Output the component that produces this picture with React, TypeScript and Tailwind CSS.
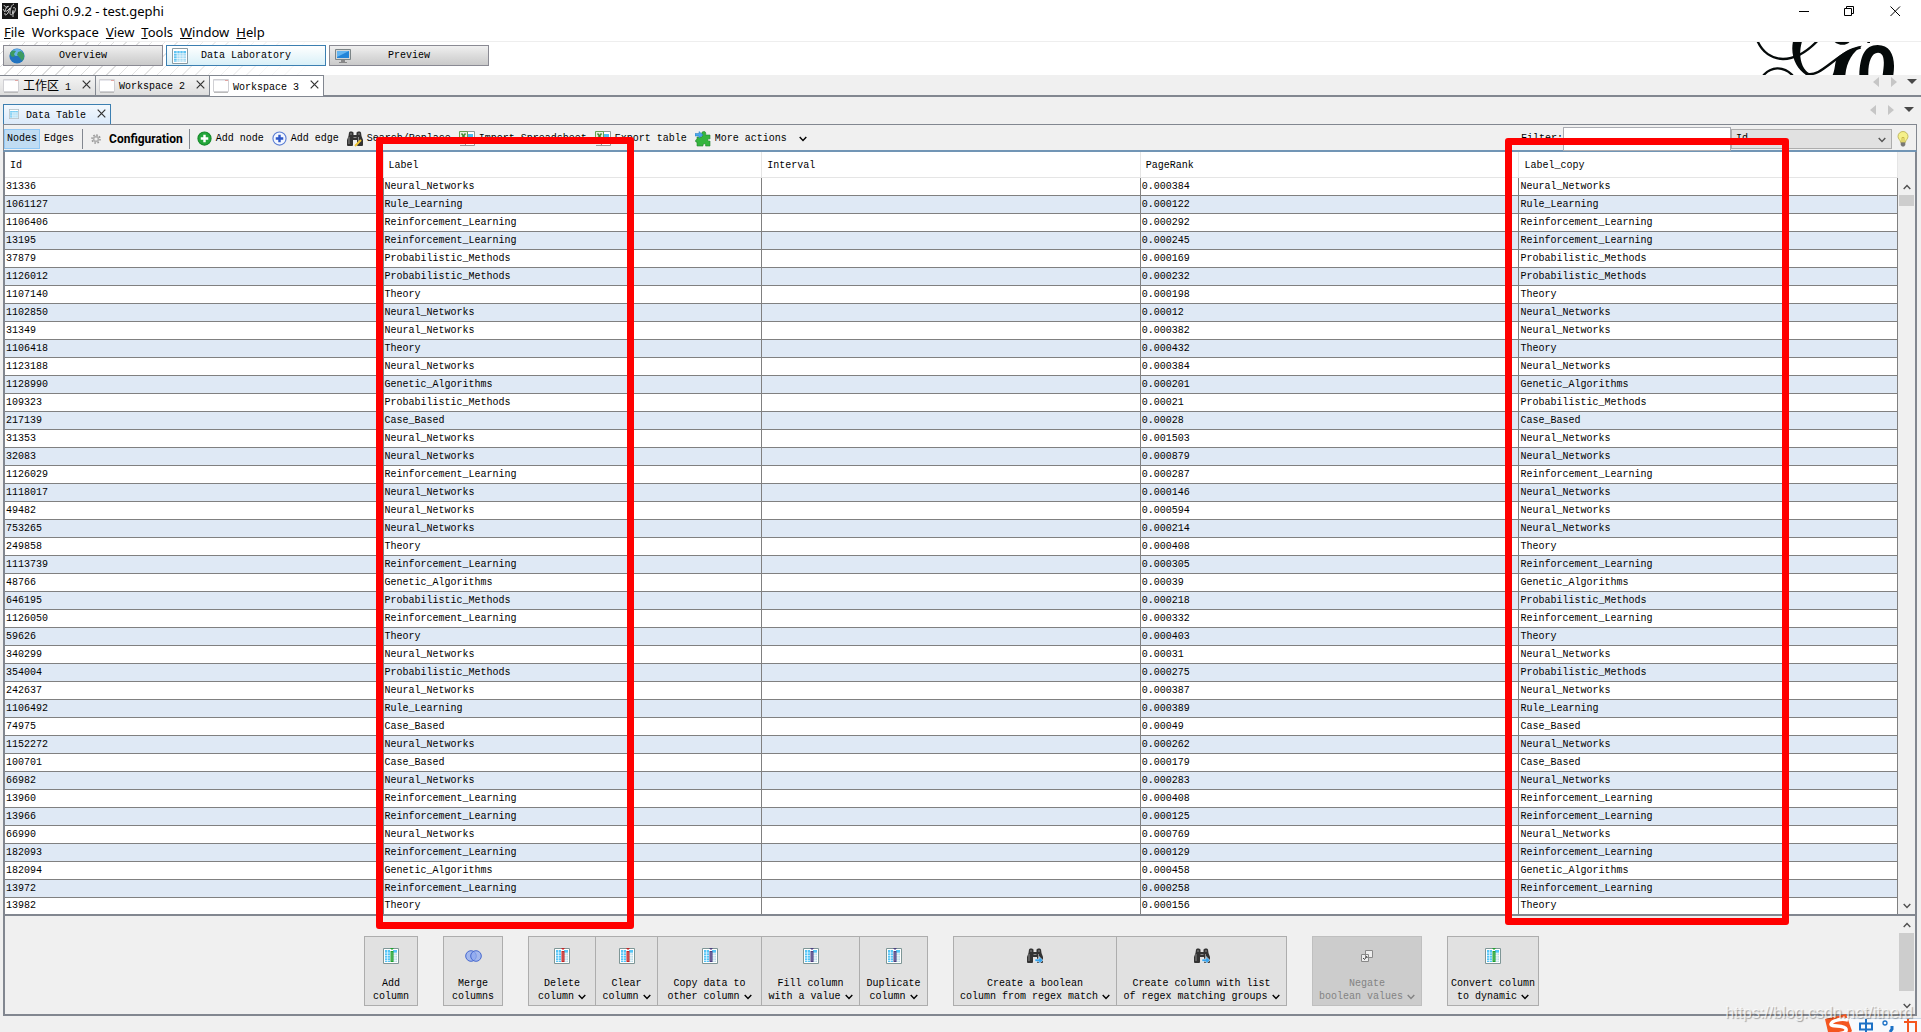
import type { ReactNode } from "react";

const labels: Record<string, string> = {
  N: "Neural_Networks",
  L: "Rule_Learning",
  R: "Reinforcement_Learning",
  P: "Probabilistic_Methods",
  T: "Theory",
  G: "Genetic_Algorithms",
  C: "Case_Based",
};

const nodes = `31336 N 0.000384
1061127 L 0.000122
1106406 R 0.000292
13195 R 0.000245
37879 P 0.000169
1126012 P 0.000232
1107140 T 0.000198
1102850 N 0.00012
31349 N 0.000382
1106418 T 0.000432
1123188 N 0.000384
1128990 G 0.000201
109323 P 0.00021
217139 C 0.00028
31353 N 0.001503
32083 N 0.000879
1126029 R 0.000287
1118017 N 0.000146
49482 N 0.000594
753265 N 0.000214
249858 T 0.000408
1113739 R 0.000305
48766 G 0.00039
646195 P 0.000218
1126050 R 0.000332
59626 T 0.000403
340299 N 0.00031
354004 P 0.000275
242637 N 0.000387
1106492 L 0.000389
74975 C 0.00049
1152272 N 0.000262
100701 C 0.000179
66982 N 0.000283
13960 R 0.000408
13966 R 0.000125
66990 N 0.000769
182093 R 0.000129
182094 G 0.000458
13972 R 0.000258
13982 T 0.000156`
  .split("\n")
  .map((line) => {
    const [id, key, rank] = line.split(" ");
    return { id, label: labels[key], rank };
  });

const columns = ["Id", "Label", "Interval", "PageRank", "Label_copy"];

function Chevron({ up = false, className = "" }: { up?: boolean; className?: string }) {
  return (
    <svg viewBox="0 0 8 6" className={`h-[6px] w-2 shrink-0 ${className}`} fill="none" stroke="currentColor" strokeWidth="1.4">
      <path d={up ? "M.7 5 4 1.5 7.3 5" : "M.7 1 4 4.5 7.3 1"} />
    </svg>
  );
}

function Close() {
  return (
    <svg viewBox="0 0 9 9" className="size-[9px]" stroke="#333" strokeWidth="1.2">
      <path d="M.7.7 8.3 8.3M8.3.7.7 8.3" />
    </svg>
  );
}

function GephiIcon() {
  return (
    <svg viewBox="0 0 16 16" className="size-4" fill="none" stroke="#ddd">
      <path fill="#181818" stroke="none" d="M0 0h16v16H0z" />
      <path d="M2 2c1 3 4 2 5 1M6 3c-4 4-3 6-1 5l3-3-2 5c-2 3-4 2-3 0M12 1c-3 1-4 6-4 9s3 2 3-1M11 5c2-1 3 0 2 3s-3 3-2 0M11 7v7M1 6l2 3" strokeWidth=".9" />
    </svg>
  );
}

function GephiLogo() {
  return (
    <svg viewBox="50 18 420 99" className="absolute top-0 right-[25px] h-[33px] w-[140px]" fill="none" stroke="#050a0a">
      <path strokeWidth="7" d="M55 16c14 32 42 53 76 53 43 0 76-26 104-55M72 118c24-26 58-29 88 0" />
      <path strokeWidth="7" d="M200 113c48 14 90-66 164-78" />
      <path fill="#050a0a" stroke="none" d="M161 16h27c-12 42-4 82 26 99l-14 2c-28-18-48-56-39-101ZM368 29c-28 20-46 46-50 88h-38c10-22 4-42 18-56 18-16 42-28 70-32ZM284 16c12 14 40 14 48 0ZM384 16h8v5h-8ZM360 117c2-56 16-90 55-90 40 0 55 37 47 90h-32c6-40 6-66-14-67-20 0-30 30-29 67Z" />
    </svg>
  );
}

function GlobeIcon() {
  return (
    <svg viewBox="0 0 16 16" className="size-4">
      <circle cx="8" cy="8" r="7.6" fill="#2273c0" />
      <ellipse cx="8" cy="4.5" rx="5.5" ry="3.5" fill="#69b3ea" />
      <path d="M1 5c2-3 4-3 6-2L5 6l1 2-2 1-2-1ZM9 4l3-1 3 3v4l-2 3-2-3-3-3Z" fill="#3d9b62" />
    </svg>
  );
}

function TableIcon({ className = "size-4" }: { className?: string }) {
  return (
    <svg viewBox="0 0 16 16" className={className}>
      <path fill="#fff" stroke="#8a9ba3" d="M.5.5h15v15H.5z" />
      <path fill="#5fc4f2" d="M2 3h12v3H2zM2 6h3v8H2z" />
      <path fill="#a5dbf3" d="M5 6h9v8H5z" />
      <path stroke="#fff" strokeWidth=".6" d="M2 5.5h12M2 8h12M2 10.5h12M2 13h12M5 3v11M8 3v11M11 3v11" />
    </svg>
  );
}

function MonitorIcon() {
  return (
    <svg viewBox="0 0 16 16" className="size-4">
      <path fill="#d5d8d8" stroke="#7c8587" d="M.5 1.5h15v10H.5z" />
      <path fill="#2485d8" d="M2 3h12v7H2z" />
      <path fill="#64b5f0" d="M2 3h12L2 9z" />
      <path fill="#888" d="M6 12h4v2h2v1H4v-1h2z" />
    </svg>
  );
}

function SheetIcon() {
  return (
    <svg viewBox="0 0 16 14" className="h-[14px] w-4">
      <path fill="#fff" stroke="#d0d0d4" d="M.5.5h15v12H.5z" />
      <path fill="#e7e7ec" d="M1 1h14v1H1z" />
      <path fill="#e1a4a0" d="M12 1h3v1h-3z" />
      <path stroke="#bbb" d="M1 13.5h14" />
    </svg>
  );
}

function GearIcon() {
  return (
    <svg viewBox="0 0 10 10" className="mx-2 size-[10px]" fill="none" stroke="#999">
      <circle cx="5" cy="5" r="4" strokeWidth="1.6" strokeDasharray="1.6 1.5" />
      <circle cx="5" cy="5" r="2.4" strokeWidth="1.6" stroke="#b0b0b0" />
    </svg>
  );
}

function PlusIcon({ blue = false }: { blue?: boolean }) {
  return (
    <svg viewBox="0 0 16 16" className="size-[15px]">
      <circle cx="8" cy="8" r="7" fill={blue ? "#f3f7ff" : "#23a63a"} stroke={blue ? "#5c7fd4" : "#168a2b"} strokeWidth="1.2" />
      <path d="M8 4v8M4 8h8" stroke={blue ? "#2d57c8" : "#fff"} strokeWidth="2.6" />
    </svg>
  );
}

function Binoculars({ arrow = false }: { arrow?: boolean }) {
  return (
    <svg viewBox="0 0 16 16" className="size-4">
      <path fill="#333" d="M2 1.500 3 .5h2l1.500 1V4h3V1.500L11 .5h2l1 1L14.500 5 16 9v5.500L15 15h-4.500l-.5-1V9H6v5l-.5 1H1l-1-.5V9l1.500-4z" />
      <path stroke="#8a8a8a" d="M2 6v7M11.5 6v7M3 3h2M11 3h2M6.5 6.5h3" />
      {arrow ? (
        <path fill="#3aa5ee" stroke="#fff" strokeWidth=".5" d="M8 11h4V8.5l4 3.8-4 3.5v-2.3H8z" />
      ) : (
        <path stroke="#efc435" strokeWidth="2" d="m8 15 6-6" />
      )}
    </svg>
  );
}

function SpreadsheetIcon() {
  return (
    <svg viewBox="0 0 16 16" className="size-4">
      <path fill="#fff" stroke="#909b98" d="M6.5.5h9v14h-9z" />
      <path fill="#4dbdf0" d="M9 3h5v3H9z" />
      <path fill="#b8e2f5" d="M9 7h5v6H9z" />
      <path fill="#e6f1de" stroke="#65a152" d="M.5.5h8v10h-8z" />
      <path stroke="#3f8a35" strokeWidth="1.5" d="m2.5 2.5 4 5M6.500 2.500l-4 5" />
      <path stroke="#999" d="M1 14.5h14" />
    </svg>
  );
}

function PuzzleIcon() {
  return (
    <svg viewBox="0 0 16 16" className="size-4">
      <path fill="#35b53e" stroke="#248331" strokeWidth=".6" d="M7 4C6 1 8 0 9.5.5S11 3 10.5 4H15v4c-3-1-3 3 0 2v5h-4.500c1-3-3-3-2.500 0H2v-4c-2 1-2-3 0-2.500V6h5z" />
      <path fill="#4aa8ee" stroke="#2678bd" strokeWidth=".5" d="M0 2.500h4V.5L8 4 4 7V5H0z" />
    </svg>
  );
}

function BulbIcon() {
  return (
    <svg viewBox="0 0 12 16" className="mr-[7px] ml-[5px] h-4 w-3">
      <path fill="#f5f08a" stroke="#b5ab4e" strokeWidth=".8" d="M6 .5a5 5 0 0 0-5 5c0 2.500 2.500 3.500 2.700 6h4.600c.2-2.500 2.700-3.500 2.700-6a5 5 0 0 0-5-5Z" />
      <path stroke="#c2ad3c" strokeWidth=".8" fill="none" d="M5 11V6.500h2V11" />
      <path fill="#777" d="M3.700 11.500h4.600V14L7 15.500H5L3.700 14z" />
    </svg>
  );
}

function ColumnIcon({ color }: { color: string }) {
  return (
    <svg viewBox="0 0 16 16" className="size-4">
      <path fill="#fff" stroke="#7e9696" d="M.5.5h15v15H.5z" />
      <path fill="#54c5f7" d="M2 2h5v12H2zM10 2h4v3h-4z" />
      <path fill="#b9dce8" d="M10 5h4v9h-4z" />
      <path stroke="#fff" strokeWidth=".6" d="M2 5h12M2 7.5h12M2 10h12M2 12.5h12M4.500 2v12M12 5v9" />
      <path fill={color} d="M7.500 3h3v11h-3zM7 0h4L9 2z" />
      <path stroke="#fff" strokeOpacity=".35" d="M9 4v9" />
    </svg>
  );
}

function MergeIcon() {
  return (
    <svg viewBox="0 0 17 12" className="h-3 w-[17px]" fill="#8fa9f0" fillOpacity=".75" stroke="#4668cf">
      <circle cx="6" cy="6" r="5.3" />
      <circle cx="11" cy="6" r="5.3" />
    </svg>
  );
}

function NegateIcon() {
  return (
    <svg viewBox="0 0 12 14" className="h-[14px] w-3">
      <path fill="#eee" stroke="#888" d="M4.500 1.500h7v7h-7zM.5 5.500h7v7h-7z" />
      <path stroke="#444" fill="none" d="m2 9 1.500 1.500L6 7" />
    </svg>
  );
}

function TabArrows({ className }: { className: string }) {
  return (
    <svg viewBox="0 0 44 12" className={`ml-auto h-3 w-[44px] ${className}`}>
      <path fill="#c6c6c6" d="M6 1v10L0 6zM18 1v10l6-5z" />
      <path fill="#484848" d="M34 3h10l-5 5z" />
    </svg>
  );
}

function ModeButton({ icon, active = false, children }: { icon: ReactNode; active?: boolean; children: ReactNode }) {
  return (
    <button
      className={`relative flex h-[21px] w-40 items-center border px-[5px] ${
        active
          ? "border-[#3c7fb1] bg-linear-to-b from-white to-[#d9f0f8]"
          : "border-[#8a8a93] bg-linear-to-b from-[#f0f0f0] via-[#dcdcdc] to-[#cacaca]"
      }`}
    >
      {icon}
      <span className="flex-1 pt-px pr-4 text-center">{children}</span>
    </button>
  );
}

function WorkspaceTab({ active = false, className, children }: { active?: boolean; className: string; children: ReactNode }) {
  return (
    <button
      className={`flex items-center border-t border-r border-[#828790] pr-1 pl-[3px] ${
        active ? "h-[21px] bg-white" : "h-5 bg-linear-to-b from-[#f4f4f4] to-[#dedede]"
      } ${className}`}
    >
      <SheetIcon />
      <span className="ml-1 pt-[3px] whitespace-pre">{children}</span>
      <span className="ml-auto pb-[3px]">
        <Close />
      </span>
    </button>
  );
}

function ToolButton({ icon, children }: { icon: ReactNode; children: ReactNode }) {
  return (
    <button className="flex items-center gap-1 whitespace-nowrap">
      {icon}
      {children}
    </button>
  );
}

function ActionButton({
  icon,
  lines,
  className,
  menu = true,
  disabled = false,
}: {
  icon: ReactNode;
  lines: [string, string];
  className: string;
  menu?: boolean;
  disabled?: boolean;
}) {
  return (
    <button
      disabled={disabled}
      className={`flex h-[70px] shrink-0 flex-col items-center border ${className} ${
        disabled ? "border-[#bfbfbf] bg-[#cccccc] text-[#838383]" : "border-[#adadad] bg-[#e1e1e1]"
      }`}
    >
      <span className="flex h-[38px] items-center">{icon}</span>
      <span className="mt-[2px] leading-[13px] whitespace-nowrap">
        {lines[0]}
        <span className="flex items-center justify-center gap-1">
          {lines[1]}
          {menu && <Chevron />}
        </span>
      </span>
    </button>
  );
}

function ScrollBar({ thumb, className = "" }: { thumb: string; className?: string }) {
  return (
    <div className={`flex w-[17px] shrink-0 flex-col items-center bg-[#f0f0f0] text-[#505050] ${className}`}>
      <Chevron up className="mt-[6px] mb-[5px]" />
      <div className={`w-[15px] bg-[#cdcdcd] ${thumb}`} />
      <Chevron className="mt-auto mb-[5px]" />
    </div>
  );
}

function NodeTable() {
  return (
    <table className="w-full flex-1 table-fixed border-separate border-spacing-0 bg-white text-left">
      <thead>
        <tr className="h-[26px]">
          {columns.map((name) => (
            <th key={name} className="border-r border-b border-[#e5e5e5] p-0 pt-[2px] pl-[5px] font-normal">
              {name}
            </th>
          ))}
        </tr>
      </thead>
      <tbody>
        {nodes.map(({ id, label, rank }) => (
          <tr
            key={id}
            className="h-[18px] even:bg-[#dfe9f5] last:h-4 [&>td]:border-r [&>td]:border-b [&>td]:border-[#808080] [&>td]:p-0 [&>td]:pl-px last:[&>td]:border-b-0"
          >
            <td>{id}</td>
            <td>{label}</td>
            <td />
            <td>{rank}</td>
            <td>{label}</td>
          </tr>
        ))}
      </tbody>
    </table>
  );
}

function InputMethodBar() {
  return (
    <svg viewBox="0 0 98 18" className="absolute right-0 bottom-0 h-[18px] w-[98px]">
      <path fill="#f8fafd" d="M26 4h72v14H26z" />
      <path stroke="#c9d6e4" d="M28 4.5h70" />
      <path fill="#f4561f" d="m2 5 21-5 6 17-1 1H5z" />
      <path fill="none" stroke="#fff" strokeWidth="3.5" d="M25 6C17 4 9 7 8 10s14 1 15 5-4 4-8 5" />
      <path fill="none" stroke="#1c71c6" strokeWidth="2" d="M37 9.500h12v6H37zM43 5v13" />
      <circle cx="62" cy="9" r="2" fill="none" stroke="#1c71c6" strokeWidth="1.3" />
      <path stroke="#1c71c6" strokeWidth="3" d="M69 12v3l-2 3" />
      <path fill="none" stroke="#f4561f" strokeWidth="2" d="M81 8h12v10M85 5v13" />
    </svg>
  );
}

export default function App() {
  return (
    <div className="relative flex min-h-screen flex-col overflow-hidden bg-[#f0f0f0] font-['Liberation_Mono','Noto_Sans_CJK_SC',monospace] text-[10px] leading-[12px] text-black">
      <header className="bg-white font-['Noto_Sans',sans-serif] text-[13px]">
        <div className="flex h-[22px] items-center pl-[2px]">
          <GephiIcon />
          <h1 className="ml-[5px]">Gephi 0.9.2 - test.gephi</h1>
          <svg viewBox="0 0 102 12" className="mr-[20px] ml-auto h-3 w-[102px]" fill="none" stroke="#000">
            <path d="M0 6.5h10M45.5 3.5h7v7h-7zM47.5 3.500v-2h7v7h-2M91.5 1.5l9.500 9.500M101 1.500 91.500 11" />
          </svg>
        </div>
        <nav className="flex h-5 items-center gap-[7px] border-b border-[#eee] pl-1">
          {["File", "Workspace", "View", "Tools", "Window", "Help"].map((item) => (
            <button key={item}>
              {item === "Workspace" ? item : <><u>{item[0]}</u>{item.slice(1)}</>}
            </button>
          ))}
        </nav>
      </header>

      <div className="relative flex h-[33px] gap-[3px] bg-white pt-[3px] pl-[3px]">
        <div className="absolute inset-y-0 left-0 w-[330px] bg-[repeating-linear-gradient(135deg,#fff_0_8px,#dedede_8px_9px)] mask-r-from-30%" />
        <ModeButton icon={<GlobeIcon />}>Overview</ModeButton>
        <ModeButton icon={<TableIcon />} active>Data Laboratory</ModeButton>
        <ModeButton icon={<MonitorIcon />}>Preview</ModeButton>
        <GephiLogo />
      </div>

      <div className="flex h-[22px] border-b-2 border-[#828790]">
        <WorkspaceTab className="w-24"><span className="text-[12px]">工作区</span> 1</WorkspaceTab>
        <WorkspaceTab className="w-[114px]">Workspace 2</WorkspaceTab>
        <WorkspaceTab className="w-[114px]" active>Workspace 3</WorkspaceTab>
        <TabArrows className="mt-px mr-[4px]" />
      </div>

      <main className="mt-[7px] mr-[4px] ml-[3px] flex flex-col">
        <div className="flex h-5">
          <button className="flex w-[108px] items-center border border-b-0 border-[#3c7fb1] bg-linear-to-b from-[#f3f8fd] to-[#dbeafa] pr-1 pl-[5px]">
            <TableIcon className="mb-[2px] size-[10px]" />
            <span className="ml-[7px] pt-[2px]">Data Table</span>
            <span className="ml-auto pb-[3px]">
              <Close />
            </span>
          </button>
          <TabArrows className="mr-[3px]" />
        </div>

        <div className="flex h-[28px] items-center border-x border-t border-b-2 border-[#828790] border-b-[#7195b5] pt-[2px]">
          <button className="h-5 border border-[#90c8f6] bg-[#c0dcf3] px-[2px]">Nodes</button>
          <button className="px-1">Edges</button>
          <div className="ml-1 h-5 w-px bg-[#828790]" />
          <button className="flex items-center font-['Roboto',sans-serif] text-[12px] font-bold">
            <GearIcon />
            Configuration
          </button>
          <div className="mr-[7px] ml-[6px] h-5 w-px bg-[#828790]" />
          <div className="flex items-center gap-2">
            <ToolButton icon={<PlusIcon />}>Add node</ToolButton>
            <ToolButton icon={<PlusIcon blue />}>Add edge</ToolButton>
            <ToolButton icon={<Binoculars />}>Search/Replace</ToolButton>
            <ToolButton icon={<SpreadsheetIcon />}>Import Spreadsheet</ToolButton>
            <ToolButton icon={<SpreadsheetIcon />}>Export table</ToolButton>
            <ToolButton icon={<PuzzleIcon />}>
              More actions
              <Chevron className="ml-2" />
            </ToolButton>
          </div>
          <label htmlFor="filter" className="ml-auto">Filter:</label>
          <input id="filter" className="h-6 w-[168px] border border-[#abadb3] bg-white px-1" />
          <div className="relative">
            <select aria-label="Filter column" className="block h-5 w-[161px] appearance-none border border-[#adadad] bg-[#e1e1e1] pl-1">
              {columns.map((name) => (
                <option key={name}>{name}</option>
              ))}
            </select>
            <Chevron className="pointer-events-none absolute top-2 right-[6px] text-[#555]" />
          </div>
          <BulbIcon />
        </div>

        <div className="flex border-x-2 border-b-2 border-[#828790]">
          <NodeTable />
          <ScrollBar thumb="h-[11px]" className="pt-[26px]" />
        </div>

        <div className="flex h-[100px] border-x-2 border-b-2 border-[#828790]">
          <div className="flex flex-1 justify-center gap-[25px] pt-5">
            <ActionButton icon={<ColumnIcon color="#1da12c" />} lines={["Add", "column"]} className="w-[54px]" menu={false} />
            <ActionButton icon={<MergeIcon />} lines={["Merge", "columns"]} className="w-[60px]" menu={false} />
            <div className="flex">
              <ActionButton icon={<ColumnIcon color="#c62222" />} lines={["Delete", "column"]} className="w-[68px]" />
              <ActionButton icon={<ColumnIcon color="#c62222" />} lines={["Clear", "column"]} className="-ml-px w-[63px]" />
              <ActionButton icon={<ColumnIcon color="#4b3d80" />} lines={["Copy data to", "other column"]} className="-ml-px w-[105px]" />
              <ActionButton icon={<ColumnIcon color="#4b3d80" />} lines={["Fill column", "with a value"]} className="-ml-px w-[99px]" />
              <ActionButton icon={<ColumnIcon color="#4b3d80" />} lines={["Duplicate", "column"]} className="-ml-px w-[69px]" />
            </div>
            <div className="flex">
              <ActionButton icon={<Binoculars arrow />} lines={["Create a boolean", "column from regex match"]} className="w-[164px]" />
              <ActionButton icon={<Binoculars arrow />} lines={["Create column with list", "of regex matching groups"]} className="-ml-px w-[171px]" />
            </div>
            <ActionButton icon={<NegateIcon />} lines={["Negate", "boolean values"]} className="w-[110px]" disabled />
            <ActionButton icon={<ColumnIcon color="#1da12c" />} lines={["Convert column", "to dynamic"]} className="w-[92px]" />
          </div>
          <ScrollBar thumb="h-[58px]" />
        </div>
      </main>

      <div className="pointer-events-none absolute top-[137px] left-[376px] h-[792px] w-[258px] rounded-[3px] border-[7px] border-[#ff0000]" />
      <div className="pointer-events-none absolute top-[138px] right-[132px] h-[787px] w-[284px] rounded-[3px] border-[7px] border-[#ff0000]" />
      <InputMethodBar />
      <p className="absolute right-[8px] bottom-[10px] font-['Liberation_Sans',sans-serif] text-[16px] leading-[18px] text-white/70 [text-shadow:1px_1px_1px_#0005]">
        https://blog.csdn.net/itnerd
      </p>
    </div>
  );
}
